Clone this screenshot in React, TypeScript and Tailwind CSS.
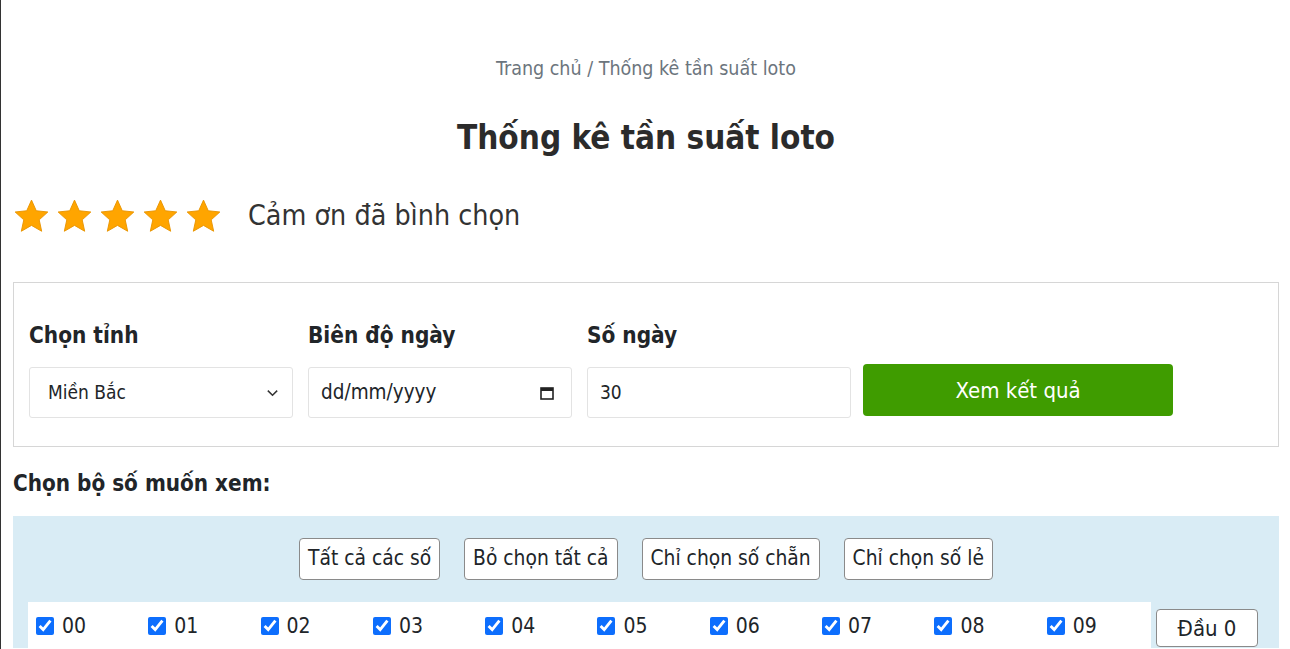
import { useState } from "react";

const numbers = ["00", "01", "02", "03", "04", "05", "06", "07", "08", "09"];

function Star() {
    return (
        <svg width="37" height="36" viewBox="0 0 24 23" className="shrink-0">
            <path
                d="M12 1.2l3.1 6.9 7.5.8-5.6 5.1 1.6 7.4L12 17.6l-6.6 3.8 1.6-7.4-5.6-5.1 7.5-.8z"
                fill="#ffa500"
                stroke="#e89400"
                strokeWidth="0.6"
                strokeLinejoin="round"
            />
        </svg>
    );
}

export default function App() {
    const [checked, setChecked] = useState<string[]>(numbers);

    const toggle = (n: string) => {
        setChecked((prev) => (prev.includes(n) ? prev.filter((x) => x !== n) : [...prev, n]));
    };

    return (
        <div
            className="min-h-[649px] border-l border-[#333] pl-3 pr-[11px] text-[#212529]"
            style={{ fontFamily: '"DejaVu Sans Condensed", "DejaVu Sans", Verdana, sans-serif' }}
        >
            <div className="pt-[57px] text-center text-[19.5px] leading-6 text-[#6c757d]">
                Trang chủ / Thống kê tần suất loto
            </div>
            <h1 className="mt-[38px] text-center text-[33px] font-bold leading-[38px] text-[#2b2b2b]">
                Thống kê tần suất loto
            </h1>

            <div className="mt-[41px] flex items-center">
                <div className="flex gap-[6px]">
                    <Star />
                    <Star />
                    <Star />
                    <Star />
                    <Star />
                </div>
                <span className="ml-[26px] text-[28.4px] leading-8 text-[#333]">Cảm ơn đã bình chọn</span>
            </div>

            <div className="mt-[48px] border border-[#d6d6d6] px-[15px] pt-[40px] pb-[28px]">
                <div className="flex items-end">
                    <div className="w-[264px]">
                        <div className="mb-[20px] text-[22.4px] font-bold leading-6">Chọn tỉnh</div>
                        <div className="flex h-[51px] items-center justify-between rounded-[3px] border border-[#e3e3e3] pl-[18px] pr-[12px] text-[19px]">
                            <span>Miền Bắc</span>
                            <svg width="15" height="15" viewBox="0 0 16 16">
                                <path d="M3 6l5 5 5-5" fill="none" stroke="#333" strokeWidth="1.6" />
                            </svg>
                        </div>
                    </div>
                    <div className="ml-[15px] w-[264px]">
                        <div className="mb-[20px] text-[22.4px] font-bold leading-6">Biên độ ngày</div>
                        <div className="flex h-[51px] items-center justify-between rounded-[3px] border border-[#e3e3e3] pl-[12px] pr-[16px] text-[20.5px]">
                            <span>dd/mm/yyyy</span>
                            <svg width="16" height="16" viewBox="0 0 16 16">
                                <rect x="2" y="3" width="12" height="11" fill="none" stroke="#222" strokeWidth="1.6" />
                                <rect x="2" y="3" width="12" height="3" fill="#222" />
                            </svg>
                        </div>
                    </div>
                    <div className="ml-[15px] w-[264px]">
                        <div className="mb-[20px] text-[22.4px] font-bold leading-6">Số ngày</div>
                        <div className="flex h-[51px] items-center rounded-[3px] border border-[#e3e3e3] pl-[12px] text-[19px]">
                            30
                        </div>
                    </div>
                    <button className="mb-[2px] ml-[12px] flex h-[52px] w-[310px] items-center justify-center rounded-[4px] bg-[#3f9c00] text-[22px] text-white">
                        Xem kết quả
                    </button>
                </div>
            </div>

            <div className="mt-[24px] text-[22.3px] font-bold leading-6">Chọn bộ số muốn xem:</div>

            <div className="mt-[21px] bg-[#d9ecf5] pt-[22px] pl-[15px]">
                <div className="flex justify-center gap-[24px] pr-[15px]">
                    {["Tất cả các số", "Bỏ chọn tất cả", "Chỉ chọn số chẵn", "Chỉ chọn số lẻ"].map((label) => (
                        <button
                            key={label}
                            className="h-[42px] rounded-[4px] border border-[#8a8a8a] bg-white px-[8px] text-[20.8px]"
                        >
                            {label}
                        </button>
                    ))}
                </div>
                <div className="mt-[22px] flex">
                    <div className="flex w-[1123px] bg-white pt-[12px] pb-[10px]">
                        {numbers.map((n) => (
                            <label key={n} className="flex w-[112.3px] items-center pl-[8px] text-[21px] leading-6">
                                <input
                                    type="checkbox"
                                    checked={checked.includes(n)}
                                    onChange={() => toggle(n)}
                                    className="h-[18px] w-[18px] accent-[#0d6efd]"
                                />
                                <span className="ml-[8px]">{n}</span>
                            </label>
                        ))}
                    </div>
                    <div className="pl-[5px] pt-[7px]">
                        <button className="h-[38px] w-[102px] rounded-[4px] border border-[#8a8a8a] bg-white text-[22px]">
                            Đầu 0
                        </button>
                    </div>
                </div>
            </div>
        </div>
    );
}
